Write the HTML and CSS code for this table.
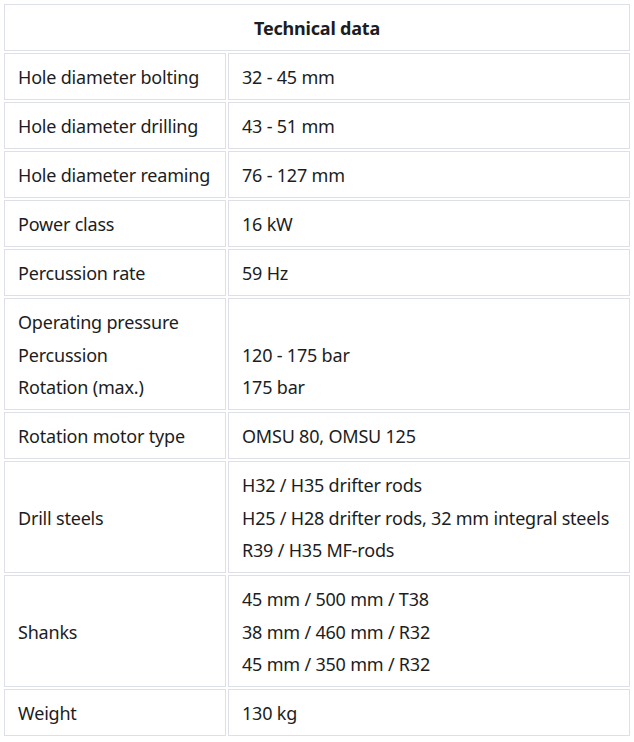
FILE: index.html
```html
<!DOCTYPE html>
<html lang="en">
<head>
<meta charset="utf-8">
<title>Technical data</title>
<link rel="stylesheet" href="styles.css">
</head>
<body>
<div class="wrap">
<table class="spec">
  <colgroup>
    <col class="col-label">
    <col class="col-value">
  </colgroup>
  <thead>
    <tr><th colspan="2">Technical data</th></tr>
  </thead>
  <tbody>
    <tr><td>Hole diameter bolting</td><td>32 - 45 mm</td></tr>
    <tr><td>Hole diameter drilling</td><td>43 - 51 mm</td></tr>
    <tr><td>Hole diameter reaming</td><td>76 - 127 mm</td></tr>
    <tr><td>Power class</td><td>16 kW</td></tr>
    <tr><td>Percussion rate</td><td>59 Hz</td></tr>
    <tr><td>Operating pressure<br>Percussion<br>Rotation (max.)</td><td><br>120 - 175 bar<br>175 bar</td></tr>
    <tr><td>Rotation motor type</td><td>OMSU 80, OMSU 125</td></tr>
    <tr><td>Drill steels</td><td>H32 / H35 drifter rods<br>H25 / H28 drifter rods, 32 mm integral steels<br>R39 / H35 MF-rods</td></tr>
    <tr><td>Shanks</td><td>45 mm / 500 mm / T38<br>38 mm / 460 mm / R32<br>45 mm / 350 mm / R32</td></tr>
    <tr><td>Weight</td><td>130 kg</td></tr>
  </tbody>
</table>
</div>
</body>
</html>
```

FILE: styles.css
```css
html, body {
  margin: 0;
  padding: 0;
  background: #ffffff;
}
.wrap {
  padding: 2px;
}
.spec {
  width: 628px;
  table-layout: fixed;
  border-collapse: separate;
  border-spacing: 2px;
  font-family: "Noto Sans", "Open Sans", sans-serif;
  font-size: 18px;
  letter-spacing: -0.2px;
  line-height: 32.5px;
  color: #1b1d22;
}
.col-label {
  width: 222px;
}
.col-value {
  width: 402px;
}
.spec th,
.spec td {
  box-sizing: border-box;
  border: 1px solid #dde1e7;
  padding: 7.25px 13px 5.25px;
  text-align: left;
  vertical-align: middle;
  font-weight: normal;
  white-space: nowrap;
}
.spec th {
  text-align: center;
  font-weight: 700;
}
```
